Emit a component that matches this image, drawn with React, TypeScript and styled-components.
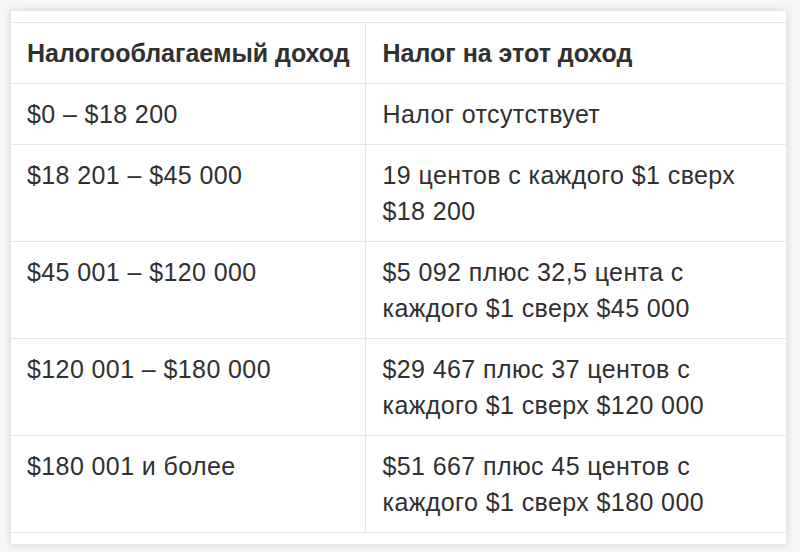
import React from 'react';
import styled, { createGlobalStyle } from 'styled-components';

const GlobalStyle = createGlobalStyle`
  html, body {
    margin: 0;
    padding: 0;
    background: #f6f6f6;
  }
  body {
    font-family: "Liberation Sans", Arial, sans-serif;
  }
`;

const Page = styled.div`
  width: 800px;
  height: 552px;
  box-sizing: border-box;
  padding: 11px 14px 12px 11px;
  background: #f6f6f6;
  overflow: hidden;
`;

const Card = styled.div`
  background: #ffffff;
  padding: 11px 0;
  box-shadow: 0 0 8px 1px rgba(0, 0, 0, 0.13);
`;

const Table = styled.table`
  width: 775px;
  border-collapse: collapse;
  table-layout: fixed;
  color: #303030;
  font-size: 25px;
`;

const Col = styled.col<{ $width: number }>`
  width: ${(p) => p.$width}px;
`;

const HeadCell = styled.th`
  text-align: left;
  font-weight: 700;
  white-space: nowrap;
  line-height: 36px;
  padding: 12px 8px 12px 16px;
  border-top: 1px solid #e6e6e6;
  border-bottom: 1px solid #e6e6e6;
  & + & {
    border-left: 1px solid #e6e6e6;
    padding-left: 17px;
  }
`;

const Cell = styled.td`
  vertical-align: top;
  line-height: 36px;
  letter-spacing: 0.4px;
  padding: 12px 8px 12px 16px;
  border-bottom: 1px solid #e6e6e6;
  & + & {
    border-left: 1px solid #e6e6e6;
    padding-left: 17px;
  }
`;

const rows: [string, string[]][] = [
  ['$0 – $18 200', ['Налог отсутствует']],
  ['$18 201 – $45 000', ['19 центов с каждого $1 сверх', '$18 200']],
  ['$45 001 – $120 000', ['$5 092 плюс 32,5 цента с', 'каждого $1 сверх $45 000']],
  ['$120 001 – $180 000', ['$29 467 плюс 37 центов с', 'каждого $1 сверх $120 000']],
  ['$180 001 и более', ['$51 667 плюс 45 центов с', 'каждого $1 сверх $180 000']],
];

export default function App() {
  return (
    <Page>
      <GlobalStyle />
      <Card>
        <Table>
          <colgroup>
            <Col $width={354} />
            <Col $width={421} />
          </colgroup>
          <thead>
            <tr>
              <HeadCell>Налогооблагаемый доход</HeadCell>
              <HeadCell>Налог на этот доход</HeadCell>
            </tr>
          </thead>
          <tbody>
            {rows.map(([income, tax]) => (
              <tr key={income}>
                <Cell>{income}</Cell>
                <Cell>
                  {tax.map((line, i) => (
                    <React.Fragment key={i}>
                      {i > 0 && <br />}
                      {line}
                    </React.Fragment>
                  ))}
                </Cell>
              </tr>
            ))}
          </tbody>
        </Table>
      </Card>
    </Page>
  );
}
